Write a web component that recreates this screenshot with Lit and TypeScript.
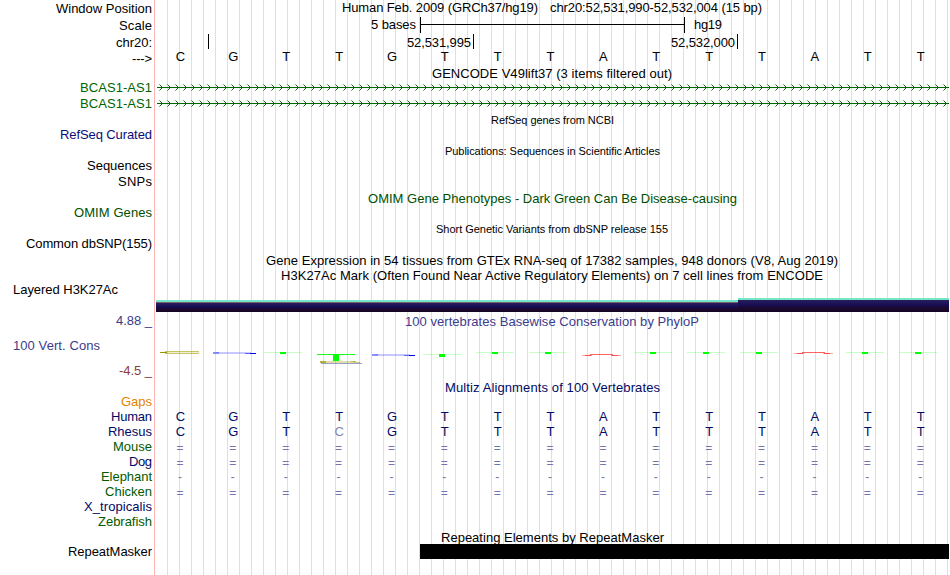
import { css, html, LitElement, svg } from 'lit';
import { customElement } from 'lit/decorators.js';

interface Label {
    text: string;
    x: number;
    y: number;
    width: number;
    color?: string;
    small?: boolean;
}

interface Letters {
    bases: string;
    y: number;
    kind?: string;
}

interface Row {
    height: number;
    labels?: Label[];
    letters?: Letters;
    draw?: () => unknown;
}

const NAVY = '#0c0c78';
const GREEN = '#006400';
const TEAL = '#000a64';
const SCORE = '#3c3c8c';

// x of each of the 15 bases
const baseX = (i: number) => 180.5 + i * 52.87;

const side = (text: string, left: number, y: number, color = '#000'): Label => ({
    text,
    x: left,
    y,
    width: 152 - left,
    color,
});

const title = (text: string, x: number, end: number, y: number, color = '#000', small = false): Label => ({
    text,
    x,
    y,
    width: end - x,
    color,
    small,
});

const transcript = (y: number) => svg`
    <path d="M157 ${y + 0.5}H949" stroke=${GREEN} />
    <path
        d=${Array.from({ length: 99 }, (_, i) => `M${159.5 + i * 8} ${y - 2.5}l3 3l-3 3`).join('')}
        stroke=${GREEN}
        fill="none"
    />
`;

const tick = (x: number, y: number, h: number) => svg`<rect x=${x} y=${y} width="1" height=${h} />`;

const thinT = (x: number, y: number, h: number, opacity = 0.22) => svg`
    <rect x=${x} y=${y} width="38" height="1" fill="#00ff00" opacity=${opacity} />
    <rect x=${x + 16} y=${y} width="6" height=${h} fill="#00ff00" />
`;

const thinG = (x: number, y: number) => svg`
    <rect x=${x + 3} y=${y} width="35" height="1" fill="#7878ff" opacity="0.4" />
    <rect x=${x} y=${y} width="6" height="2" fill="#4646ff" opacity="0.6" />
    <rect x=${x + 6} y=${y + 1} width="30" height="1" fill="#6e6eff" opacity="0.4" />
    <rect x=${x + 32} y=${y + 1} width="5" height="1" fill="#3c3cff" opacity="0.7" />
    <rect x=${x + 37} y=${y + 1} width="6" height="1" fill="#0000dc" />
`;

const thinA = (x: number, y: number) => svg`
    <path d="M${x} ${y + 1.5}h10M${x + 29} ${y + 1.5}h10" stroke="#ff0000" opacity="0.35" />
    <path d="M${x + 3} ${y + 1.5}h6M${x + 30} ${y + 1.5}h6" stroke="#ff0000" opacity="0.5" />
    <path d="M${x + 8} ${y + 0.5}h23" stroke="#ff0000" opacity="0.6" />
`;

const conservation = () => svg`
    <path d="M165 351.5h34M165 353.5h34" stroke="#a0a000" opacity="0.6" />
    <path d="M163 352.5h37" stroke="#a0a000" opacity="0.15" />
    <path d="M160 352.5h7" stroke="#969600" />
    ${thinG(213, 352)}
    ${thinT(264, 352, 2)}
    ${thinT(317, 354, 7, 0.9)}
    <rect x="320" y="361" width="35" height="2" fill="#a0a000" opacity="0.35" />
    <rect x="320" y="361" width="6" height="2" fill="#969600" opacity="0.6" />
    <rect x="321" y="363" width="41" height="1" fill="#3c3c96" opacity="0.5" />
    <path d="M351 361.5h5M354 362.5h6" stroke="#969600" opacity="0.5" />
    ${thinG(372, 354)}
    ${thinT(423, 354, 3)}
    ${thinT(476, 352, 2)}
    ${thinT(529, 352, 2)}
    ${thinA(582, 354)}
    ${thinT(634, 352, 2)}
    ${thinT(687, 352, 2)}
    ${thinT(740, 352, 2)}
    ${thinA(794, 352)}
    ${thinT(846, 352, 2)}
    ${thinT(899, 352, 2)}
`;

const h3k27ac = () => svg`
    <defs>
        <linearGradient id="mark" x1="0" y1="0" x2="0" y2="1">
            <stop offset="0" stop-color="#281e5f" />
            <stop offset="0.5" stop-color="#140a50" />
            <stop offset="0.6" stop-color="#1e0a32" />
            <stop offset="1" stop-color="#140523" />
        </linearGradient>
    </defs>
    <rect x="156" y="300" width="582" height="2" fill="#73e6c3" />
    <rect x="156" y="302" width="582" height="1" fill="#785f6e" />
    <rect x="156" y="303" width="582" height="9" fill="url(#mark)" />
    <rect x="738" y="298" width="211" height="2" fill="#73e6c3" />
    <rect x="738" y="300" width="211" height="12" fill="url(#mark)" />
`;

const ROWS: Row[] = [
    {
        height: 16,
        labels: [
            side('Window Position', 56, 13),
            title('Human Feb. 2009 (GRCh37/hg19)', 342, 538, 12),
            title('chr20:52,531,990-52,532,004 (15 bp)', 550, 762, 12),
        ],
    },
    {
        height: 17,
        labels: [side('Scale', 119, 30), title('5 bases', 371, 416, 29), title('hg19', 694, 722, 29)],
        draw: () => svg`${tick(420, 17, 16)}${tick(684, 17, 16)}<rect x="420" y="24" width="265" height="1" />`,
    },
    {
        height: 17,
        labels: [
            side('chr20:', 116, 47),
            title('52,531,995', 407, 471, 47),
            title('52,532,000', 671, 735, 47),
        ],
        draw: () => svg`${tick(208, 34, 15)}${tick(473, 34, 15)}${tick(737, 34, 15)}`,
    },
    {
        height: 16,
        labels: [side('--->', 132, 63)],
        letters: { bases: 'CGTTGTTTATTTATT', y: 61 },
    },
    { height: 14, labels: [title('GENCODE V49lift37 (3 items filtered out)', 432, 672, 78)] },
    { height: 15, labels: [side('BCAS1-AS1', 80, 92, GREEN)], draw: () => transcript(87) },
    { height: 16, labels: [side('BCAS1-AS1', 80, 108, GREEN)], draw: () => transcript(103) },
    { height: 16, labels: [title('RefSeq genes from NCBI', 491, 614, 124, '#000', true)] },
    { height: 15, labels: [side('RefSeq Curated', 60, 139, NAVY)] },
    { height: 16, labels: [title('Publications: Sequences in Scientific Articles', 445, 660, 155, '#000', true)] },
    { height: 15, labels: [side('Sequences', 87, 170)] },
    { height: 16, labels: [side('SNPs', 118, 186)] },
    { height: 16, labels: [title('OMIM Gene Phenotypes - Dark Green Can Be Disease-causing', 368, 737, 203, '#005000')] },
    { height: 15, labels: [side('OMIM Genes', 74, 217, '#005000')] },
    { height: 16, labels: [title('Short Genetic Variants from dbSNP release 155', 436, 668, 233, '#000', true)] },
    { height: 15, labels: [side('Common dbSNP(155)', 26, 248)] },
    {
        height: 16,
        labels: [title('Gene Expression in 54 tissues from GTEx RNA-seq of 17382 samples, 948 donors (V8, Aug 2019)', 266, 838, 265)],
    },
    {
        height: 15,
        labels: [title('H3K27Ac Mark (Often Found Near Active Regulatory Elements) on 7 cell lines from ENCODE', 281, 823, 280)],
    },
    { height: 30, labels: [title('Layered H3K27Ac', 13, 118, 294)], draw: h3k27ac },
    {
        height: 16,
        labels: [
            side('4.88 _', 116, 325, SCORE),
            title('100 vertebrates Basewise Conservation by PhyloP', 405, 699, 326, SCORE),
        ],
    },
    {
        height: 51,
        labels: [title('100 Vert. Cons', 13, 100, 350, SCORE), side('-4.5 _', 119, 375, '#8c3c3c')],
        draw: conservation,
    },
    { height: 15, labels: [title('Multiz Alignments of 100 Vertebrates', 445, 660, 392, TEAL)] },
    { height: 15, labels: [side('Gaps', 121, 406, '#e68200')] },
    {
        height: 15,
        labels: [side('Human', 111, 421, TEAL)],
        letters: { bases: 'CGTTGTTTATTTATT', y: 421, kind: 'aligned' },
    },
    {
        height: 15,
        labels: [side('Rhesus', 108, 436, TEAL)],
        letters: { bases: 'CGTcGTTTATTTATT', y: 436, kind: 'aligned' },
    },
    {
        height: 15,
        labels: [side('Mouse', 113, 451, '#005a00')],
        letters: { bases: '===============', y: 452, kind: 'gap' },
    },
    {
        height: 15,
        labels: [side('Dog', 129, 466, TEAL)],
        letters: { bases: '===============', y: 467, kind: 'gap' },
    },
    {
        height: 15,
        labels: [side('Elephant', 101, 481, '#005a00')],
        letters: { bases: '---------------', y: 481, kind: 'gap' },
    },
    {
        height: 15,
        labels: [side('Chicken', 105, 496, '#005a00')],
        letters: { bases: '===============', y: 497, kind: 'gap' },
    },
    { height: 15, labels: [side('X_tropicalis', 84, 511, TEAL)] },
    { height: 15, labels: [side('Zebrafish', 98, 526, '#005a00')] },
    { height: 15, labels: [title('Repeating Elements by RepeatMasker', 441, 664, 542)] },
    {
        height: 15,
        labels: [side('RepeatMasker', 68, 556)],
        draw: () => svg`<rect x="420" y="544" width="529" height="15" />`,
    },
];

@customElement('app-root')
export class GenomeBrowser extends LitElement {
    static override styles = css`
        :host {
            display: block;
            width: 950px;
            height: 575px;
            overflow: hidden;
            background: #fff;
        }

        .tracks {
            display: flex;
            flex-direction: column;
            height: 575px;
            background:
                linear-gradient(#ffb4b4, #ffb4b4) 154px 0 / 1px 100% no-repeat,
                repeating-linear-gradient(90deg, #dcdcfa 0 1px, transparent 1px 12px) 167px 0 / 782px 100% no-repeat;
        }

        .row {
            display: block;
            flex: none;
            overflow: visible;
            font-family: 'Liberation Sans', Arial, sans-serif;
            font-size: 13px;
        }

        .small {
            font-size: 11px;
        }

        .base {
            text-anchor: middle;
            font-size: 13px;
        }

        .base.aligned {
            fill: #000a64;
        }

        .base.mismatch {
            fill: #8284b2;
        }

        .base.gap {
            fill: #7375ae;
            font-size: 12px;
        }
    `;

    private _renderLabel(label: Label) {
        return svg`<text
            class=${label.small ? 'small' : ''}
            x=${label.x}
            y=${label.y}
            fill=${label.color ?? '#000'}
            textLength=${label.width}
        >${label.text}</text>`;
    }

    private _renderLetters({ bases, y, kind = '' }: Letters) {
        const shift = kind === 'gap' ? -0.5 : 0;
        return [...bases].map(
            (base, i) => svg`<text
                class="base ${kind} ${base === 'c' ? 'mismatch' : ''}"
                x=${baseX(i) + shift}
                y=${y}
            >${base.toUpperCase()}</text>`
        );
    }

    override render() {
        let top = 0;
        return html`
            <div class="tracks">
                ${ROWS.map(row => {
                    const y = top;
                    top += row.height;
                    return html`
                        <svg class="row" width="950" height=${row.height} viewBox="0 ${y} 950 ${row.height}">
                            ${row.draw?.()} ${row.labels?.map(label => this._renderLabel(label))}
                            ${row.letters ? this._renderLetters(row.letters) : ''}
                        </svg>
                    `;
                })}
            </div>
        `;
    }
}
